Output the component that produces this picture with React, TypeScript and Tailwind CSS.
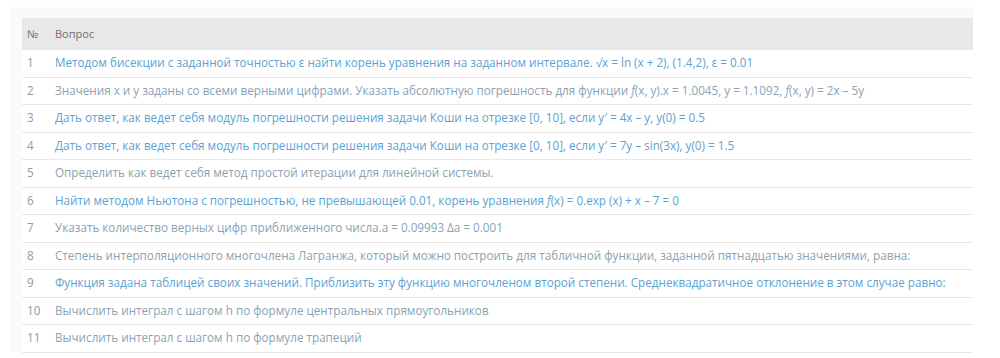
import React from "react";

type Row = { n: number; text: React.ReactNode; blue: boolean };

const F = ({ children }: { children: React.ReactNode }) => <i>{children}</i>;

const rows: Row[] = [
  { n: 1, blue: true, text: <>Методом бисекции с заданной точностью ε найти корень уравнения на заданном интервале. √x = ln (x + 2), (1.4,2), ε = 0.01</> },
  { n: 2, blue: false, text: <>Значения х и у заданы со всеми верными цифрами. Указать абсолютную погрешность для функции <F>f</F>(x, y).x = 1.0045, y = 1.1092, <F>f</F>(x, y) = 2x – 5y</> },
  { n: 3, blue: true, text: <>Дать ответ, как ведет себя модуль погрешности решения задачи Коши на отрезке [0, 10], если y′ = 4x – y, y(0) = 0.5</> },
  { n: 4, blue: true, text: <>Дать ответ, как ведет себя модуль погрешности решения задачи Коши на отрезке [0, 10], если y′ = 7y – sin(3x), y(0) = 1.5</> },
  { n: 5, blue: false, text: <>Определить как ведет себя метод простой итерации для линейной системы.</> },
  { n: 6, blue: true, text: <>Найти методом Ньютона с погрешностью, не превышающей 0.01, корень уравнения <F>f</F>(x) = 0.exp (x) + x – 7 = 0</> },
  { n: 7, blue: false, text: <>Указать количество верных цифр приближенного числа.a = 0.09993 Δa = 0.001</> },
  { n: 8, blue: false, text: <>Степень интерполяционного многочлена Лагранжа, который можно построить для табличной функции, заданной пятнадцатью значениями, равна:</> },
  { n: 9, blue: true, text: <>Функция задана таблицей своих значений. Приблизить эту функцию многочленом второй степени. Среднеквадратичное отклонение в этом случае равно:</> },
  { n: 10, blue: false, text: <>Вычислить интеграл с шагом h по формуле центральных прямоугольников</> },
  { n: 11, blue: false, text: <>Вычислить интеграл с шагом h по формуле трапеций</> },
];

export default function App() {
  return (
    <div
      className="w-[1000px] h-[358px] bg-white pt-[7px] pl-[10px] overflow-hidden"
      style={{ fontFamily: "'Open Sans', Lato, sans-serif" }}
    >
      <div className="w-[963px] h-[345px] bg-[#fafafa] pt-[11px] pl-[12px]">
        <div className="bg-white">
          <div className="flex items-center h-[32px] bg-[#e8e8e8] text-[11px] text-[#707070]">
            <div className="w-[33px] pl-[5px]">№</div>
            <div>Вопрос</div>
          </div>
          {rows.map((r) => (
            <div
              key={r.n}
              className="flex items-center h-[27.5px] border-b border-[#e8e8e8] text-[11.7px] whitespace-nowrap"
            >
              <div className="w-[33px] pl-[5px] text-[#999999]">{r.n}</div>
              <div className={r.blue ? "text-[#5ba3d2]" : "text-[#8aa3b4]"}>{r.text}</div>
            </div>
          ))}
        </div>
      </div>
    </div>
  );
}
